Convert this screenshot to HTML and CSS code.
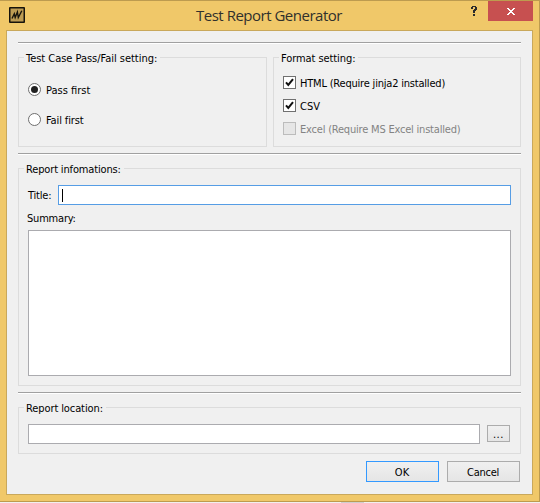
FILE: index.html
```html
<!DOCTYPE html>
<html lang="en">
<head>
<meta charset="utf-8">
<title>Test Report Generator</title>
<link rel="stylesheet" href="styles.css">
</head>
<body>
<div class="window">
  <header class="titlebar">
    <svg class="app-icon" width="16" height="16" viewBox="0 0 16 16"><rect width="16" height="16" rx="1" fill="#16130b"/><rect x="1.5" y="1.5" width="13" height="13" fill="#bd9c54"/><path d="M3 11.5 5.3 6.8 6.2 10.5 8.4 5 9.3 10.5 12.8 3.8" fill="none" stroke="#17140d" stroke-width="1.4"/></svg>
    <h1 class="caption">Test Report Generator</h1>
    <svg class="help" width="6" height="10" viewBox="0 0 6 10" shape-rendering="crispEdges"><path d="M1 0h4v1h1v3h-1v1h-1v2h-2v-3h1v-1h1v-2h-2v2h-2v-2h1zM2 8h2v2h-2z" fill="#2b2b2b"/></svg>
    <div class="close"><svg width="8" height="7" viewBox="0 0 8 7" shape-rendering="crispEdges"><path d="M0 0h2v1h1v1h2v-1h1v-1h2v1h-1v1h-1v1h-1v1h1v1h1v1h1v1h-2v-1h-1v-1h-2v1h-1v1h-2v-1h1v-1h1v-1h1v-1h-1v-1h-1v-1h-1z" fill="#fff"/></svg></div>
  </header>
  <main class="client">
    <div class="rule"></div>
    <div class="settings">
      <section class="group passfail">
        <h2 class="legend"><span class="t-passfail">Test Case Pass/Fail setting:</span></h2>
        <label class="option radio-row"><span class="radio on"></span><span class="t-pass">Pass first</span></label>
        <label class="option radio-row"><span class="radio"></span><span class="t-fail">Fail first</span></label>
      </section>
      <section class="group format">
        <h2 class="legend"><span class="t-format">Format setting:</span></h2>
        <label class="option"><span class="check"><svg width="11" height="11" viewBox="0 0 11 11"><path d="M2 5.3 4.3 8 9 2.2" fill="none" stroke="#111" stroke-width="2"/></svg></span><span class="t-html">HTML (Require jinja2 installed)</span></label>
        <label class="option"><span class="check"><svg width="11" height="11" viewBox="0 0 11 11"><path d="M2 5.3 4.3 8 9 2.2" fill="none" stroke="#111" stroke-width="2"/></svg></span><span class="t-csv">CSV</span></label>
        <label class="option disabled"><span class="check"></span><span class="t-excel">Excel (Require MS Excel installed)</span></label>
      </section>
    </div>
    <div class="rule"></div>
    <section class="group info">
      <h2 class="legend"><span class="t-info">Report infomations:</span></h2>
      <div class="title-row"><span class="t-title">Title:</span><div class="field focused"><i class="caret"></i></div></div>
      <div class="summary-label"><span class="t-summary">Summary:</span></div>
      <div class="field summary"></div>
    </section>
    <div class="rule"></div>
    <section class="group location">
      <h2 class="legend"><span class="t-location">Report location:</span></h2>
      <div class="location-row"><div class="field"></div><div class="button browse">...</div></div>
    </section>
    <footer class="actions">
      <div class="button default"><span class="t-ok">OK</span></div>
      <div class="button"><span class="t-cancel">Cancel</span></div>
    </footer>
  </main>
</div>
<div class="behind"></div>
</body>
</html>
```
FILE: styles.css
```css
* { box-sizing: border-box; }
body { margin: 0; width: 540px; height: 503px; overflow: hidden; background: #f0f0f0; color: #000; font: 11px/14px "DejaVu Sans Condensed", "DejaVu Sans", sans-serif; font-stretch: condensed; white-space: nowrap; }
h1, h2 { margin: 0; font-size: inherit; font-weight: normal; }
svg { display: block; }
.window { height: 502px; padding: 0 6px; background: #f0c869; border: solid #bd9b4f; border-width: 1px 1px 1px 0; }
.titlebar { height: 29px; display: flex; align-items: flex-start; }
.app-icon { margin: 6px 0 0 3px; }
.caption { width: 360px; padding-left: 171px; color: #30302c; font: 15px/29px "Open Sans", sans-serif; letter-spacing: -.49px; }
.help { margin: 5px 0 0 86px; }
.close { width: 45px; height: 20px; margin-left: auto; margin-right: 0; padding: 7px 0 0 19px; background: #c75050; }
.client { height: 465px; padding: 11px 11px 0; background: #f0f0f0; border: 1px solid #c9a85b; }
.rule { height: 2px; background: #fff; border-top: 1px solid #a0a0a0; }
.settings { display: flex; gap: 6px; margin: 13px 0 6px; }
.group { border: 1px solid #dcdcdc; }
.legend { height: 14px; margin: -7px 0 0 5px; }
.legend span { display: inline-block; padding: 1px 3px 0 2px; background: #f0f0f0; }
.passfail { width: 249px; height: 90px; }
.format { width: 248px; height: 90px; }
.option { display: flex; align-items: center; height: 13px; margin: 0 0 10px 9px; gap: 4px; }
.legend + .option { margin-top: 11px; }
.option > span:last-child, .title-row > span { padding-top: 2px; }
.radio-row { margin-bottom: 17px; gap: 5px; }
.legend + .radio-row { margin-top: 18px; }
.radio { display: flex; width: 13px; height: 13px; border: 1px solid #6f6f6f; border-radius: 50%; background: #fff; }
.radio.on::after { content: ""; width: 7px; height: 7px; margin: 2px; border-radius: 50%; background: #202020; }
.check { width: 13px; height: 13px; border: 1px solid #707070; background: #fff; }
.disabled { color: #838383; }
.disabled .check { border-color: #bcbcbc; background: #e6e6e6; }
.info { height: 218px; margin: 13px 0 6px; }
.title-row { display: flex; align-items: center; height: 20px; margin: 9px 9px 0; }
.title-row > span { width: 30px; }
.field { flex: 1; height: 20px; background: #fff; border: 1px solid #ababaf; }
.focused { padding: 3px; border-color: #569de5; }
.caret { display: block; width: 1px; height: 13px; background: #000; }
.summary-label { height: 14px; margin: 7px 8px 4px; }
.summary { height: 146px; margin: 0 9px; }
.location { height: 47px; margin-top: 13px; }
.location-row { display: flex; margin: 9px 10px 0 9px; gap: 7px; }
.button { display: flex; align-items: center; justify-content: center; width: 73px; height: 21px; border: 1px solid #acacac; background: linear-gradient(#f0f0f0, #e5e5e5); }
.button span { padding: 3px 1px 0 0; }
.browse { width: 23px; height: 17px; margin-top: 1px; padding-top: 2px; letter-spacing: .6px; }
.default { border-color: #3399ff; }
.actions { display: flex; justify-content: flex-end; gap: 8px; margin: 7px 1px 0; }
.behind { width: 23px; height: 1px; margin-left: 341px; background: #cfcfcf; }
.t-passfail { letter-spacing: -.03px; }
.t-format { letter-spacing: -.08px; }
.t-html { letter-spacing: -.2px; }
.t-excel { letter-spacing: -.2px; }
.t-fail { letter-spacing: -.12px; }
.t-info { letter-spacing: -.15px; }
.t-title { letter-spacing: -.2px; }
.t-summary { letter-spacing: -.2px; }
.t-location { letter-spacing: -.1px; }
.t-cancel { letter-spacing: -.25px; }
```
